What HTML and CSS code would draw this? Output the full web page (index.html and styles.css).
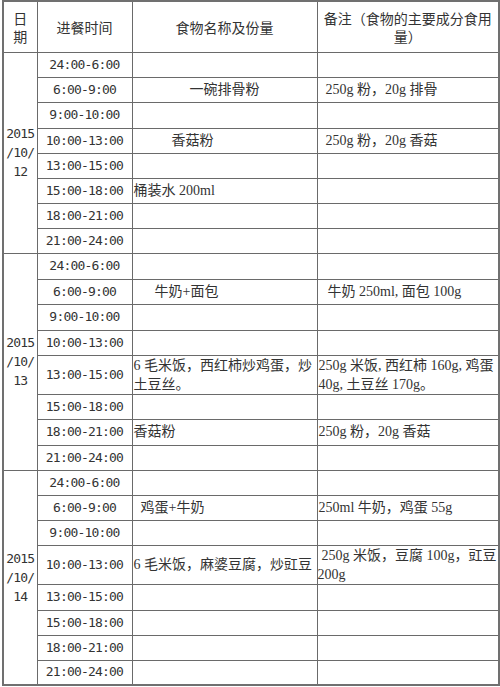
FILE: index.html
```html
<!DOCTYPE html>
<html lang="zh">
<head>
<meta charset="utf-8">
<title>饮食记录</title>
<link rel="stylesheet" href="styles.css">
</head>
<body>
<table class="log">
  <colgroup>
    <col class="c-date">
    <col class="c-time">
    <col class="c-food">
    <col class="c-note">
  </colgroup>
  <thead>
    <tr class="h-head">
      <th class="date-head">日<br>期</th>
      <th>进餐时间</th>
      <th>食物名称及份量</th>
      <th class="note-head">备注（食物的主要成分食用<br>量）</th>
    </tr>
  </thead>
  <tbody>
    <tr class="h25">
      <td class="date" rowspan="8">2015<br>/10/<br>12</td>
      <td class="time">24:00-6:00</td><td></td><td></td>
    </tr>
    <tr class="h25"><td class="time">6:00-9:00</td><td class="center">一碗排骨粉</td><td class="ind-7">250g 粉，20g 排骨</td></tr>
    <tr class="h26"><td class="time">9:00-10:00</td><td></td><td></td></tr>
    <tr class="h25"><td class="time">10:00-13:00</td><td class="ind-38">香菇粉</td><td class="ind-7">250g 粉，20g 香菇</td></tr>
    <tr class="h25"><td class="time">13:00-15:00</td><td></td><td></td></tr>
    <tr class="h25"><td class="time">15:00-18:00</td><td>桶装水 200ml</td><td></td></tr>
    <tr class="h25"><td class="time">18:00-21:00</td><td></td><td></td></tr>
    <tr class="h25"><td class="time">21:00-24:00</td><td></td><td></td></tr>

    <tr class="h26">
      <td class="date" rowspan="8">2015<br>/10/<br>13</td>
      <td class="time">24:00-6:00</td><td></td><td></td>
    </tr>
    <tr class="h25"><td class="time">6:00-9:00</td><td class="ind-21">牛奶+面包</td><td class="ind-9">牛奶 250ml, 面包 100g</td></tr>
    <tr class="h26"><td class="time">9:00-10:00</td><td></td><td></td></tr>
    <tr class="h25"><td class="time">10:00-13:00</td><td></td><td></td></tr>
    <tr class="h39"><td class="time">13:00-15:00</td><td class="two">6 毛米饭，西红柿炒鸡蛋，炒<br>土豆丝。</td><td class="two">250g 米饭, 西红柿 160g, 鸡蛋<br>40g, 土豆丝 170g。</td></tr>
    <tr class="h25"><td class="time">15:00-18:00</td><td></td><td></td></tr>
    <tr class="h26"><td class="time">18:00-21:00</td><td>香菇粉</td><td>250g 粉，20g 香菇</td></tr>
    <tr class="h25"><td class="time">21:00-24:00</td><td></td><td></td></tr>

    <tr class="h25">
      <td class="date" rowspan="8">2015<br>/10/<br>14</td>
      <td class="time">24:00-6:00</td><td></td><td></td>
    </tr>
    <tr class="h25"><td class="time">6:00-9:00</td><td class="ind-7">鸡蛋+牛奶</td><td>250ml 牛奶，鸡蛋 55g</td></tr>
    <tr class="h25"><td class="time">9:00-10:00</td><td></td><td></td></tr>
    <tr class="h39"><td class="time">10:00-13:00</td><td>6 毛米饭，麻婆豆腐，炒豇豆</td><td class="two first-indent">250g 米饭，豆腐 100g，豇豆<br>200g</td></tr>
    <tr class="h26"><td class="time">13:00-15:00</td><td></td><td></td></tr>
    <tr class="h25"><td class="time">15:00-18:00</td><td></td><td></td></tr>
    <tr class="h25"><td class="time">18:00-21:00</td><td></td><td></td></tr>
    <tr class="h25"><td class="time">21:00-24:00</td><td></td><td></td></tr>
  </tbody>
</table>
</body>
</html>
```

FILE: styles.css
```css
html, body {
  margin: 0;
  padding: 0;
  background: #ffffff;
}

body {
  font-family: "Liberation Serif", "Noto Sans CJK SC", serif;
  font-size: 14px;
  color: #333333;
}

.log {
  border-collapse: collapse;
  table-layout: fixed;
  width: 496px;
  margin: 0 0 0 2px;
  border: 2px solid #707070;
}

.c-date { width: 34px; }
.c-time { width: 95px; }
.c-food { width: 185px; }
.c-note { width: 182px; }

.log th,
.log td {
  border: 1px solid #6a6a6a;
  padding: 0 1px;
  vertical-align: middle;
  text-align: left;
  white-space: nowrap;
  overflow: hidden;
  line-height: 18px;
}

.log th {
  font-weight: normal;
  text-align: center;
  font-family: "Noto Sans CJK SC", sans-serif;
}

.h-head { height: 51px; }
.h25 { height: 25px; }
.h26 { height: 26px; }
.h39 { height: 39px; }

.log th.date-head {
  line-height: 18px;
  padding: 0;
}

.log th.note-head {
  line-height: 18px;
  padding: 0;
}

.log td.date,
.log td.time {
  font-family: "DejaVu Sans Mono", monospace;
  font-size: 13px;
  letter-spacing: -0.8px;
  text-align: center;
}

.log td.date {
  line-height: 19px;
  padding: 0;
}

.log td.center { text-align: center; }
.log td.ind-7 { padding-left: 8px; }
.log td.ind-9 { padding-left: 10px; }
.log td.ind-21 { padding-left: 22px; }
.log td.ind-38 { padding-left: 39px; }

.log td.two { line-height: 19px; }
.log td.first-indent {
  text-indent: 4px;
  padding: 0;
}
```
